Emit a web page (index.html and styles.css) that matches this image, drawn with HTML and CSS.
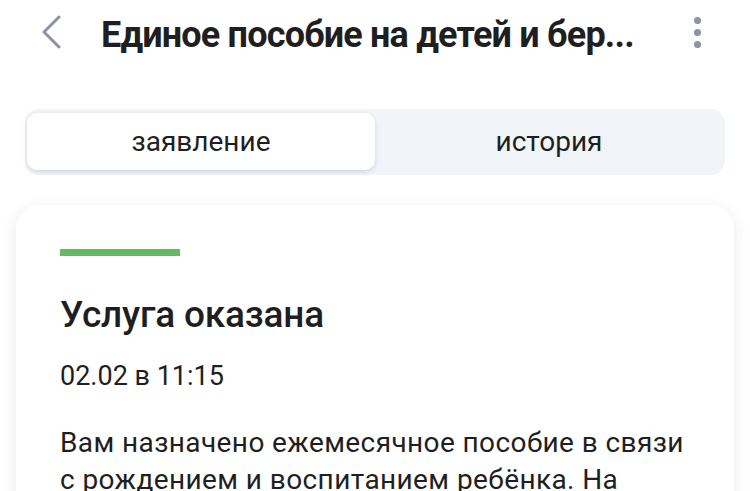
FILE: index.html
```html
<!DOCTYPE html>
<html>
<head>
<link rel="stylesheet" href="styles.css">
</head>
<body>

<header class="topbar">
  <button class="back" aria-label="Назад">
    <svg width="22" height="34" viewBox="0 0 22 34"><path d="M19 2 L4 17 L19 32" fill="none" stroke="#8b93a5" stroke-width="3" stroke-linecap="round" stroke-linejoin="round"/></svg>
  </button>
  <h1 class="title">Единое пособие на детей и бер...</h1>
  <button class="more" aria-label="Ещё">
    <span class="dot"></span><span class="dot"></span><span class="dot"></span>
  </button>
</header>

<div class="tabs">
  <div class="tab active">заявление</div>
  <div class="tab">история</div>
</div>

<div class="card">
  <div class="status-bar"></div>
  <h2 class="status">Услуга оказана</h2>
  <p class="date">02.02 в 11:15</p>
  <p class="text">Вам назначено ежемесячное пособие в связи с рождением и воспитанием ребёнка. На</p>
</div>

</body>
</html>
```

FILE: styles.css
```css
body {
  margin: 0;
  font-family: Roboto, "Noto Sans", sans-serif;
  background-color: #fff;
  color: #1f1f21;
  overflow: hidden;
}

.topbar {
  display: flex;
  align-items: center;
  height: 64px;
  padding: 0 0 0 40px;
}

.back {
  border: none;
  background: none;
  padding: 0;
  width: 61px;
  height: 34px;
  text-align: left;
}

.title {
  margin: 5px 0 0;
  font-size: 36px;
  font-weight: 700;
  letter-spacing: -0.8px;
  flex: 1;
  white-space: nowrap;
}

.more {
  border: none;
  background: none;
  padding: 0;
  width: 8px;
  margin-right: 48px;
  display: flex;
  flex-direction: column;
  gap: 5px;
}

.dot {
  width: 7px;
  height: 7px;
  border-radius: 50%;
  background-color: #8b93a5;
}

.tabs {
  display: flex;
  margin: 45px 25px 0;
  padding: 4px 2px 5px;
  background-color: #f1f4f9;
  border-radius: 14px;
}

.tab {
  flex: 1;
  height: 57px;
  line-height: 57px;
  text-align: center;
  font-size: 28px;
  color: #1f1f21;
}

.tab.active {
  background-color: #fff;
  border-radius: 10px;
  box-shadow: 0 2px 5px rgba(40, 50, 80, 0.15);
}

.card {
  margin: 30px 16px 0;
  padding: 44px 44px 40px;
  background-color: #fff;
  border-radius: 24px;
  box-shadow: 0 4px 16px rgba(40, 50, 80, 0.1);
}

.status-bar {
  width: 120px;
  height: 7px;
  background-color: #62bb62;
}

.status {
  margin: 37px 0 0;
  font-size: 37px;
  font-weight: 500;
  letter-spacing: -0.2px;
}

.date {
  margin: 24px 0 0;
  font-size: 27px;
}

.text {
  margin: 32px 0 0;
  font-size: 28px;
  line-height: 37px;
  letter-spacing: 0.4px;
}
```
